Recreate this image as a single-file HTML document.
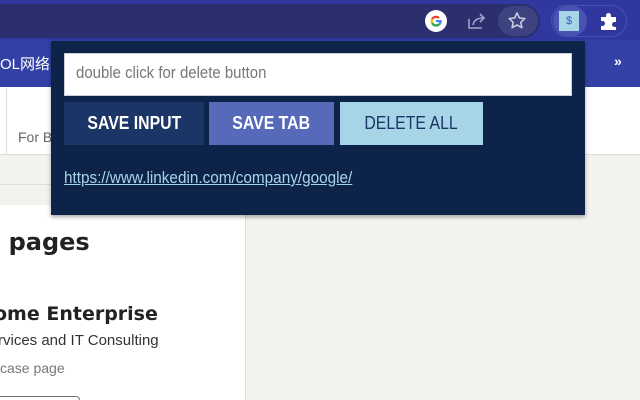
<!DOCTYPE html>
<html><head><style>
html,body{margin:0;width:640px;height:400px;overflow:hidden}
body{position:relative;background:#f3f2ef;font-family:"Liberation Sans",sans-serif}
div{position:absolute;box-sizing:border-box}
.n{transform:scaleX(.88);transform-origin:0 50%;white-space:nowrap}
.c{display:inline-block;transform:scaleX(.88);white-space:nowrap}
</style></head><body>
<div style="left:0;top:0;width:640px;height:40px;background:#3038a0"></div>
<div style="left:0;top:4px;width:540px;height:34px;background:#2b2f6e;border-radius:0 17px 17px 0"></div>
<div style="left:498px;top:6px;width:40px;height:30px;background:#3d4281;border-radius:15px"></div>
<div style="left:551px;top:5px;width:76px;height:32px;border:1px solid #4a52b0;border-radius:16px"></div>
<div style="left:553px;top:6px;width:34px;height:30px;background:#4a52b4;border-radius:15px"></div>
<svg style="position:absolute;left:425px;top:10px" width="22" height="22" viewBox="0 0 22 22"><circle cx="11" cy="11" r="11" fill="#fff"/><path d="M6.2 8.4A5.6 5.6 0 0 1 14.8 7.3L13.3 8.8A3.5 3.5 0 0 0 8.1 9.6z" fill="#ea4335"/><path d="M6.2 8.4L8.1 9.6A3.5 3.5 0 0 0 8.1 12.4L6.2 13.7A5.6 5.6 0 0 1 6.2 8.4z" fill="#fbbc05"/><path d="M6.2 13.7L8.1 12.4A3.5 3.5 0 0 0 13.6 13.3L15.3 14.9A5.6 5.6 0 0 1 6.2 13.7z" fill="#34a853"/><path d="M15.3 14.9L13.6 13.3A3.4 3.4 0 0 0 14.3 12.1H11V10h5.6A5.6 5.6 0 0 1 15.3 14.9z" fill="#4285f4"/></svg>
<svg style="position:absolute;left:466px;top:11px" width="22" height="20" viewBox="0 0 22 20" fill="none" stroke="#a0a4c8" stroke-width="1.6"><path d="M3 8v9h13"/><path d="M7 14c1-5 5-7 10-7M14 3l4 4-4 4"/></svg>
<svg style="position:absolute;left:507px;top:11px" width="20" height="20" viewBox="0 0 20 20" fill="none" stroke="#c8cae0" stroke-width="1.6" stroke-linejoin="round"><path d="M10 2l2.4 5 5.4.6-4 3.7 1.1 5.4L10 14l-4.9 2.7 1.1-5.4-4-3.7 5.4-.6z"/></svg>
<div style="left:559px;top:11px;width:20px;height:20px;background:#a6d5e8;color:#3a58b8;font-size:11px;text-align:center;line-height:20px">$</div>
<svg style="position:absolute;left:598px;top:10px" width="22" height="22" viewBox="0 0 22 22"><path d="M3 7h5V5.5a2.5 2.5 0 0 1 5 0V7h5v5h-1.5a2.5 2.5 0 0 0 0 5H18v3H3v-4h1.5a2.5 2.5 0 0 0 0-5H3z" fill="#fff"/></svg>
<div style="left:0;top:40px;width:640px;height:47px;background:#3340a6"></div>
<div style="left:0;top:53px;color:#fff;font-size:15px;font-family:'Liberation Sans','Noto Sans CJK SC',sans-serif">OL网络</div>
<div style="left:614px;top:53px;color:#fff;font-size:14px;font-weight:bold">»</div>
<div style="left:0;top:87px;width:640px;height:68px;background:#fff;border-bottom:1px solid #ddd"></div>
<div style="left:6px;top:88px;width:1px;height:66px;background:#ddd"></div>
<div style="left:18px;top:129px;color:#666;font-size:14px">For B</div>
<div style="left:0;top:184px;width:200px;height:1px;background:#ddd"></div>
<div style="left:0;top:205px;width:246px;height:195px;background:#fff;border-right:1px solid #ddd"></div>
<div style="left:-8px;top:228px;color:#222;font-size:24px;font-weight:bold;font-family:'DejaVu Sans',sans-serif">l pages</div>
<div style="left:-6px;top:303px;color:#222;font-size:19px;font-weight:bold;font-family:'DejaVu Sans',sans-serif">ome Enterprise</div>
<div style="left:-2px;top:332px;color:#333;font-size:15px">rvices and IT Consulting</div>
<div style="left:0;top:360px;color:#777;font-size:14px">case page</div>
<div style="left:-20px;top:396px;width:100px;height:4px;border:1px solid #777;border-bottom:none;border-radius:10px 10px 0 0"></div>
<div style="left:51px;top:41px;width:534px;height:174px;background:#0d2349;box-shadow:0 2px 4px rgba(0,0,0,.35)"></div>
<div style="left:64px;top:53px;width:508px;height:43px;background:#fff;border:1px solid #c8d0e0"></div>
<div class="n" style="left:76px;top:63px;color:#777;font-size:17px">double click for delete button</div>
<div style="left:64px;top:102px;width:140px;height:43px;background:#1a3566;color:#fff;font-weight:bold;font-size:18px;text-align:center;line-height:43px"><span class="c">SAVE INPUT</span></div>
<div style="left:209px;top:102px;width:125px;height:43px;background:#566ab9;color:#fff;font-weight:bold;font-size:18px;text-align:center;line-height:43px"><span class="c">SAVE TAB</span></div>
<div style="left:340px;top:102px;width:143px;height:43px;background:#a6d5e8;color:#1d3566;font-size:18px;text-align:center;line-height:43px"><span class="c">DELETE ALL</span></div>
<div class="n" style="left:64px;top:168px;color:#a6d5e8;font-size:17px;text-decoration:underline;transform:scaleX(.9)">https://www.linkedin.com/company/google/</div>
</body></html>
